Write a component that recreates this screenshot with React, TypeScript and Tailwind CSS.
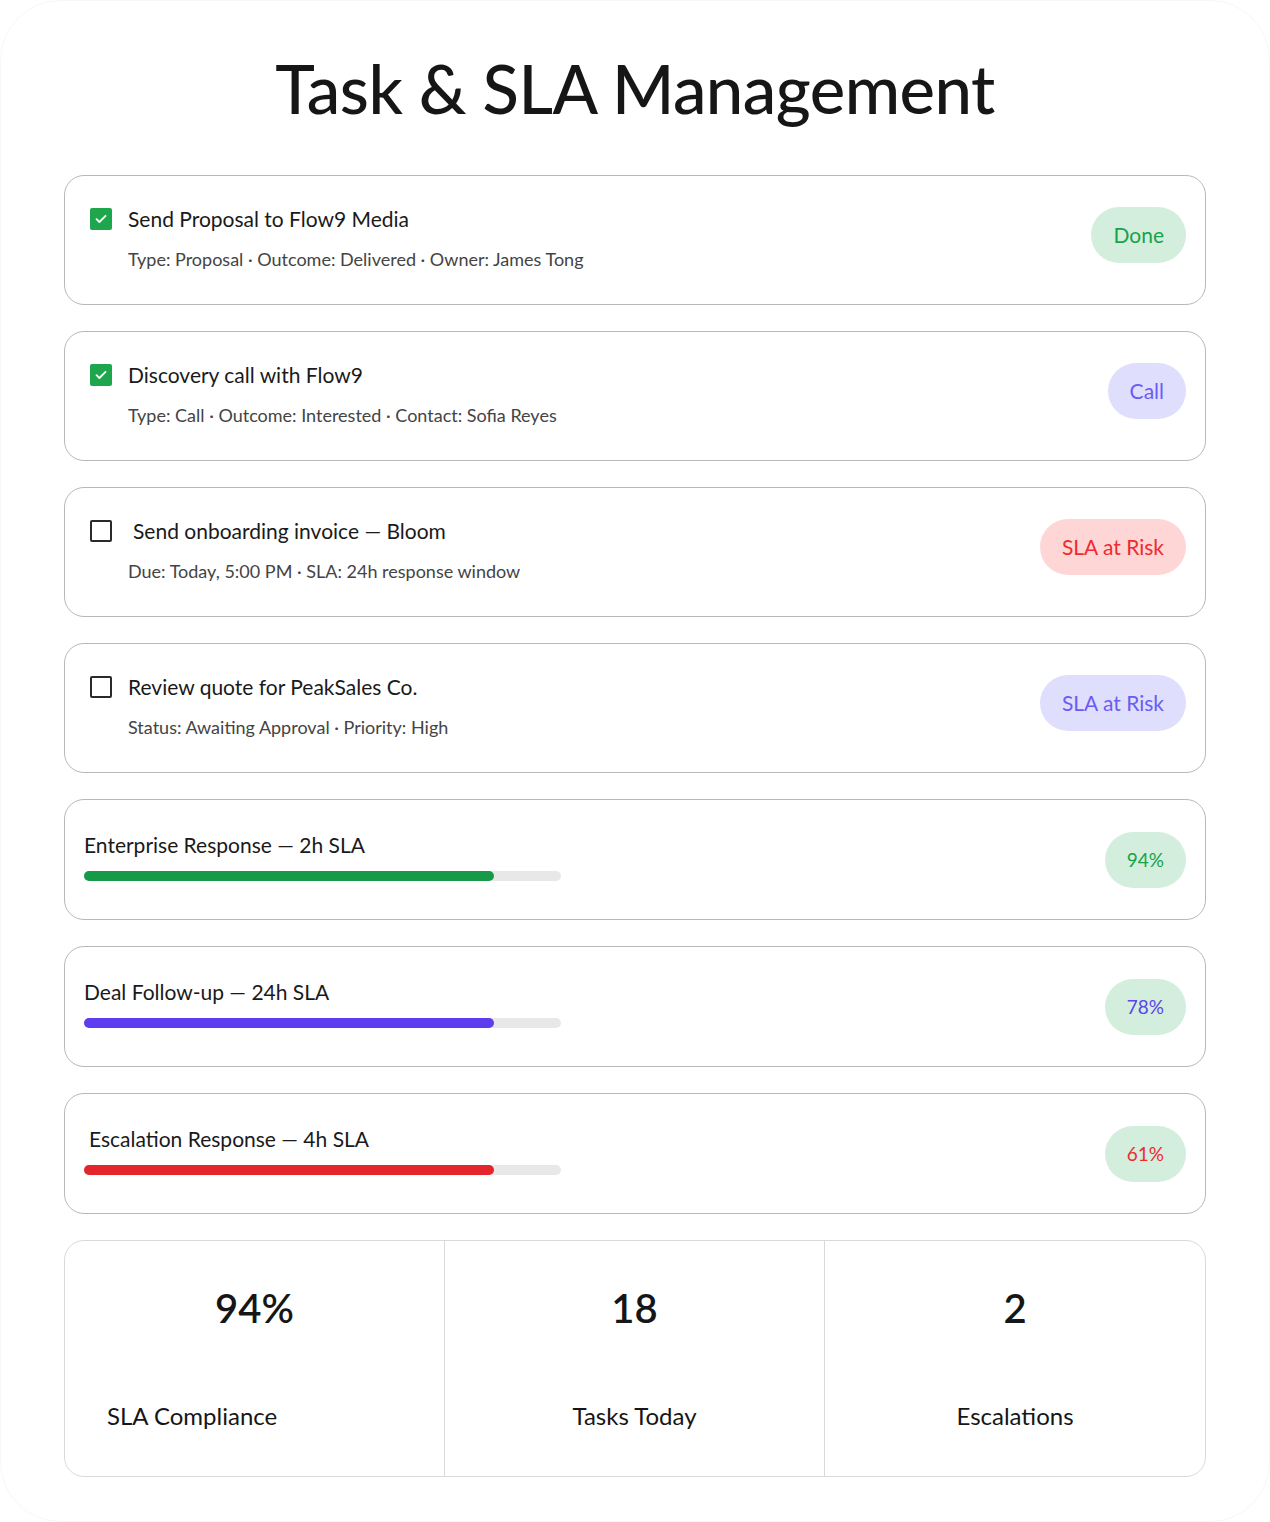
import React from 'react';

type Task = {
  title: string;
  meta: string;
  done: boolean;
  badge: string;
  badgeClass: string;
  indent?: boolean;
};

const TASKS: Task[] = [
  {
    title: 'Send Proposal to Flow9 Media',
    meta: 'Type: Proposal · Outcome: Delivered · Owner: James Tong',
    done: true,
    badge: 'Done',
    badgeClass: 'bg-[#d3eedd] text-[#17a34a]',
  },
  {
    title: 'Discovery call with Flow9',
    meta: 'Type: Call · Outcome: Interested · Contact: Sofia Reyes',
    done: true,
    badge: 'Call',
    badgeClass: 'bg-[#e0defd] text-[#6a5cf2]',
  },
  {
    title: 'Send onboarding invoice — Bloom',
    meta: 'Due: Today, 5:00 PM · SLA: 24h response window',
    done: false,
    badge: 'SLA at Risk',
    badgeClass: 'bg-[#fed6d6] text-[#ee2b2f]',
    indent: true,
  },
  {
    title: 'Review quote for PeakSales Co.',
    meta: 'Status: Awaiting Approval · Priority: High',
    done: false,
    badge: 'SLA at Risk',
    badgeClass: 'bg-[#e0defd] text-[#6a5cf2]',
  },
];

const SLAS = [
  { label: 'Enterprise Response — 2h SLA', pct: '94%', bar: 'bg-[#179a48]', text: 'text-[#17a34a]', indent: false },
  { label: 'Deal Follow-up — 24h SLA', pct: '78%', bar: 'bg-[#5d3ded]', text: 'text-[#5b45ec]', indent: false },
  { label: 'Escalation Response — 4h SLA', pct: '61%', bar: 'bg-[#e3262b]', text: 'text-[#ee2b2f]', indent: true },
];

function Checkbox({ checked }: { checked: boolean }) {
  if (checked) {
    return (
      <span className="flex h-[22px] w-[22px] shrink-0 items-center justify-center rounded-[2px] bg-[#1ea64c]">
        <svg width="12" height="10" viewBox="0 0 12 10" fill="none">
          <path d="M1.5 5.2 4.4 8 10.5 1.8" stroke="white" strokeWidth="1.8" strokeLinecap="round" strokeLinejoin="round" />
        </svg>
      </span>
    );
  }
  return <span className="h-[22px] w-[22px] shrink-0 rounded-[2px] border-2 border-[#2a2a2a] bg-white" />;
}

function TaskCard({ task }: { task: Task }) {
  return (
    <div className="flex h-[130px] items-start justify-between rounded-[20px] border border-[#b8b8b8] bg-white pl-[25px] pr-[19px] pt-[31px]">
      <div className="-mt-[2px] flex flex-col">
        <div className="flex h-[28px] items-center gap-[16px]">
          <Checkbox checked={task.done} />
          <span className={`text-[21px] leading-[28px] text-[#1a1a1a] ${task.indent ? 'ml-[5px]' : ''}`}>{task.title}</span>
        </div>
        <p className="ml-[38px] mt-[14px] text-[18px] leading-[24px] text-[#444]">{task.meta}</p>
      </div>
      <span className={`flex h-[56px] items-center rounded-full px-[22px] text-[21px] ${task.badgeClass}`}>{task.badge}</span>
    </div>
  );
}

function SlaCard({ sla }: { sla: (typeof SLAS)[number] }) {
  return (
    <div className="flex h-[121px] items-start justify-between rounded-[20px] border border-[#b8b8b8] bg-white pl-[19px] pr-[19px] pt-[31px]">
      <div className="flex flex-col">
        <span className={`text-[21px] leading-[28px] text-[#1a1a1a] ${sla.indent ? 'ml-[5px]' : ''}`}>{sla.label}</span>
        <div className="mt-[12px] h-[10px] w-[477px] rounded-full bg-[#e8e8e8]">
          <div className={`h-full w-[410px] rounded-full ${sla.bar}`} />
        </div>
      </div>
      <span className={`mt-[1px] flex h-[56px] items-center rounded-full bg-[#d3eedd] px-[22px] text-[19px] ${sla.text}`}>{sla.pct}</span>
    </div>
  );
}

export default function App() {
  return (
    <div className="min-h-screen bg-white" style={{ fontFamily: 'Lato, "Open Sans", sans-serif' }}>
      <div className="h-[1522px] rounded-[60px] border border-[#f7f7f7] px-[63px]">
        <div className="flex h-[174px] items-center justify-center">
          <h1 className="text-[67px] font-medium leading-none tracking-[-0.5px] text-[#161616]">Task &amp; SLA Management</h1>
        </div>

        <div className="flex flex-col gap-[26px]">
          {TASKS.map((t) => (
            <TaskCard key={t.title} task={t} />
          ))}
          {SLAS.map((s) => (
            <SlaCard key={s.label} sla={s} />
          ))}

          {/* summary numbers */}
          <div className="grid h-[237px] grid-cols-3 rounded-[20px] border border-[#d9d9d9] bg-white">
            <div className="flex flex-col border-r border-[#d9d9d9] pt-[46px]">
              <span className="text-center text-[40px] font-semibold leading-[42px] text-[#161616]">94%</span>
              <span className="ml-[42px] mt-[72px] text-[24px] leading-[30px] text-[#161616]">SLA Compliance</span>
            </div>
            <div className="flex flex-col border-r border-[#d9d9d9] pt-[46px] text-center">
              <span className="text-[40px] font-semibold leading-[42px] text-[#161616]">18</span>
              <span className="mt-[72px] text-[24px] leading-[30px] text-[#161616]">Tasks Today</span>
            </div>
            <div className="flex flex-col pt-[46px] text-center">
              <span className="text-[40px] font-semibold leading-[42px] text-[#161616]">2</span>
              <span className="mt-[72px] text-[24px] leading-[30px] text-[#161616]">Escalations</span>
            </div>
          </div>
        </div>
      </div>
    </div>
  );
}
